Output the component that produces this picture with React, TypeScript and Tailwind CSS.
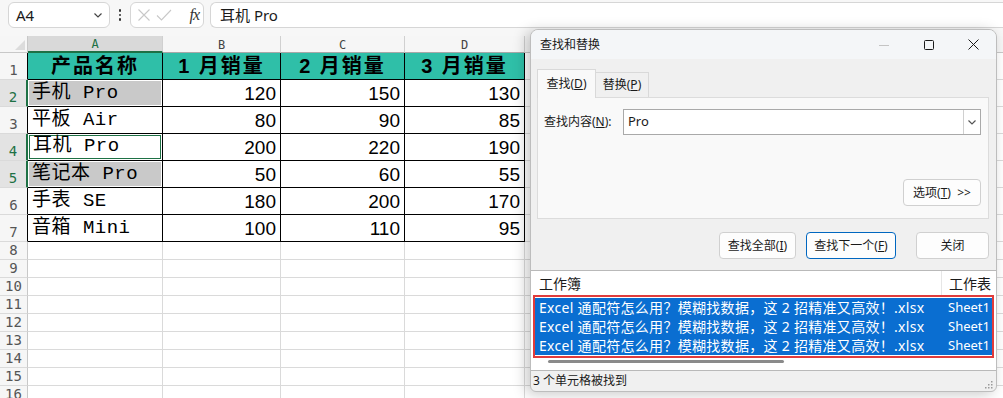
const COLS = [135, 118, 124, 120]
const HEAD = ['产品名称', '1 月销量', '2 月销量', '3 月销量']
const DATA: [string, number, number, number][] = [
  ['手机 Pro', 120, 150, 130],
  ['平板 Air', 80, 90, 85],
  ['耳机 Pro', 200, 220, 190],
  ['笔记本 Pro', 50, 60, 55],
  ['手表 SE', 180, 200, 170],
  ['音箱 Mini', 100, 110, 95],
]
const HITS = [2, 4, 5]
const RESULT = 'Excel 通配符怎么用？模糊找数据，这 2 招精准又高效！.xlsx'

const cellFont = { fontFamily: '"Liberation Mono", "Noto Sans CJK SC", monospace' }
const numFont = { fontFamily: '"Liberation Sans", Arial, sans-serif' }
const hdrFont = { fontFamily: '"DejaVu Sans Mono", "Liberation Mono", monospace' }
const uiFont = { fontFamily: '"Noto Sans", "Noto Sans CJK SC", sans-serif' }

function Chevron({ className = '' }: { className?: string }) {
  return (
    <svg width="12" height="12" viewBox="0 0 12 12" className={className}>
      <path d="M2.5 4.5 L6 8 L9.5 4.5" fill="none" stroke="currentColor" strokeWidth="1.2" />
    </svg>
  )
}

function RowHead({ n, h, line }: { n: number; h: string; line: string }) {
  const hit = HITS.includes(n)
  return (
    <div
      className={`${h} w-[28px] shrink-0 flex items-end justify-center pb-[1px] border-b border-b-[#dadada] border-r ${line} ${hit ? 'bg-[#e3e3e3] text-[#1e7145]' : 'bg-[#f6f6f6] text-[#555]'} text-[14px] leading-none`}
      style={hdrFont}
    >
      <span className="pb-[1px]">{n}</span>
    </div>
  )
}

function Sheet() {
  return (
    <div className="flex flex-col">
      {/* column headers */}
      <div className="flex h-[17px]">
        <div className="w-[28px] shrink-0 bg-[#f6f6f6] border-r border-b border-[#c8c8c8] flex items-end justify-end p-[2px]">
          <svg width="10" height="10" viewBox="0 0 10 10">
            <path d="M10 0 L10 10 L0 10 Z" fill="#dcdcdc" />
          </svg>
        </div>
        {['A', 'B', 'C', 'D'].map((c, i) => (
          <div
            key={c}
            style={{ width: COLS[i], ...hdrFont }}
            className={`shrink-0 flex items-end justify-center text-[12px] leading-none pb-[1px] border-r border-[#d0d0d0] ${i === 0 ? 'bg-[#d9d9d9] text-[#1e7145] border-b-2 border-b-[#1e7145]' : 'bg-[#f6f6f6] text-[#444] border-b border-b-[#a8a8a8]'}`}
          >
            {c}
          </div>
        ))}
        <div className="flex-1 bg-[#f6f6f6] border-b border-[#c8c8c8]" />
      </div>

      {/* row 1 */}
      <div className="flex h-[27px]">
        <RowHead n={1} h="h-[27px]" line="border-r-black" />
        {HEAD.map((t, i) => (
          <div
            key={t}
            style={{ width: COLS[i], fontFamily: '"Liberation Sans", "Noto Sans CJK SC", sans-serif' }}
            className="shrink-0 h-[27px] bg-[#2fbfa8] border-r border-b border-black flex items-end justify-center pb-[1px] text-[20px] font-bold tracking-[2px] leading-[24px] text-black whitespace-pre"
          >
            {t}
          </div>
        ))}
        <div className="flex-1 border-b border-[#dadada]" />
      </div>

      {DATA.map((r, k) => {
        const n = k + 2
        const hit = HITS.includes(n)
        const active = n === 4
        return (
          <div key={n} className="flex h-[27px]">
            <RowHead n={n} h="h-[27px]" line={hit ? 'border-r-2 border-r-[#1e7145]' : 'border-r-black'} />
            <div style={{ width: COLS[0] }} className="shrink-0 h-[27px] border-r border-b border-black p-[1px] bg-white">
              <div
                style={cellFont}
                className={`h-full flex items-end pl-[3px] text-[19px] tracking-[0.5px] leading-[23px] text-black whitespace-pre ${active ? 'border border-[#1e7145] pl-[2px]' : hit ? 'bg-[#c9c9c9]' : ''}`}
              >
                {r[0]}
              </div>
            </div>
            {[r[1], r[2], r[3]].map((v, i) => (
              <div
                key={i}
                style={{ width: COLS[i + 1], ...numFont }}
                className="shrink-0 h-[27px] border-r border-b border-black flex items-end justify-end pr-[4px] text-[19px] leading-[24px] text-black"
              >
                {v}
              </div>
            ))}
            <div className="flex-1 border-b border-[#dadada]" />
          </div>
        )
      })}

      {Array.from({ length: 9 }, (_, k) => {
        const n = k + 8
        return (
          <div key={n} className="flex h-[18px]">
            <RowHead n={n} h="h-[18px]" line="border-r-[#c8c8c8]" />
            {COLS.map((w, i) => (
              <div key={i} style={{ width: w }} className="shrink-0 h-[18px] border-r border-b border-[#dadada]" />
            ))}
            <div className="flex-1 border-b border-[#dadada]" />
          </div>
        )
      })}
    </div>
  )
}

function Btn({ children, focus = false, className = '' }: { children: React.ReactNode; focus?: boolean; className?: string }) {
  return (
    <div
      className={`h-[27px] rounded-[4px] bg-[#fdfdfd] flex items-center justify-center text-[12px] text-[#1a1a1a] ${focus ? 'border border-[#0067c0]' : 'border border-[#d0d0d0]'} ${className}`}
    >
      {children}
    </div>
  )
}

function Dialog() {
  return (
    <div
      style={uiFont}
      className="absolute left-[530px] top-[29px] w-[467px] h-[363px] rounded-t-[8px] rounded-b-[6px] border border-[#bdbdbd] bg-[#f0f0f0] shadow-[-4px_2px_14px_rgba(0,0,0,0.22)] flex flex-col overflow-hidden"
    >
      {/* title bar */}
      <div className="h-[29px] shrink-0 flex items-center bg-[#f4f6f8] pl-[9px]">
        <span className="text-[12px] text-[#1a1a1a] flex-1">查找和替换</span>
        <div className="w-[45px] h-full flex items-center justify-center">
          <svg width="10" height="10" viewBox="0 0 10 10"><path d="M0 5.5 H10" stroke="#c4c4c4" strokeWidth="1" /></svg>
        </div>
        <div className="w-[45px] h-full flex items-center justify-center">
          <svg width="10" height="10" viewBox="0 0 10 10"><rect x="0.5" y="0.5" width="9" height="9" rx="1" fill="none" stroke="#1a1a1a" strokeWidth="1" /></svg>
        </div>
        <div className="w-[45px] h-full flex items-center justify-center">
          <svg width="11" height="11" viewBox="0 0 11 11"><path d="M0.5 0.5 L10.5 10.5 M10.5 0.5 L0.5 10.5" stroke="#1a1a1a" strokeWidth="1" /></svg>
        </div>
      </div>

      <div className="px-[6px] pt-[10px]">
        {/* tabs */}
        <div className="flex items-end h-[28px] relative z-10">
          <div className="h-[29px] w-[59px] bg-[#f9f9f9] border border-[#d9d9d9] border-b-0 flex items-center justify-center text-[12px] text-[#1a1a1a] -mb-px">
            <span>查找(<u>D</u>)</span>
          </div>
          <div className="h-[25px] w-[53px] bg-[#f0f0f0] border border-l-0 border-[#d9d9d9] border-b-0 flex items-center justify-center text-[12px] text-[#1a1a1a]">
            <span>替换(<u>P</u>)</span>
          </div>
        </div>
        {/* panel */}
        <div className="h-[122px] mr-[1px] bg-[#f9f9f9] border border-[#dcdcdc] flex flex-col px-[6px] pt-[11px] pb-[12px]">
          <div className="flex items-center">
            <span className="w-[79px] text-[12px] text-[#1a1a1a]">查找内容(<u>N</u>):</span>
            <div className="flex-1 h-[26px] bg-white border border-[#a9a9a9] flex items-center mr-[1px]">
              <span className="flex-1 pl-[4px] text-[13px] text-[#1a1a1a]">Pro</span>
              <div className="w-[17px] h-full border-l border-[#d0d0d0] flex items-center justify-center text-[#555]">
                <Chevron />
              </div>
            </div>
          </div>
          <div className="flex-1" />
          <div className="flex justify-end pr-[1px]">
            <Btn className="w-[78px]">
              <span>选项(<u>T</u>)&nbsp;&nbsp;&gt;&gt;</span>
            </Btn>
          </div>
        </div>
        {/* buttons */}
        <div className="flex justify-end mt-[13px] mr-[1px]">
          <Btn className="w-[77px]"><span>查找全部(<u>I</u>)</span></Btn>
          <Btn focus className="w-[90px] ml-[10px]"><span>查找下一个(<u>F</u>)</span></Btn>
          <Btn className="w-[73px] ml-[20px]"><span>关闭</span></Btn>
        </div>
      </div>

      {/* results */}
      <div className="mt-[11px] h-[101px] bg-white border-y border-[#b9b9b9] flex flex-col">
        <div className="h-[24px] flex items-center text-[14px] text-[#1a1a1a]">
          <span className="w-[410px] pl-[8px]">工作簿</span>
          <div className="h-full border-l border-[#e6e6e6] pl-[7px] flex items-center">工作表</div>
        </div>
        <div className="mx-[2px] border-2 border-[#e03c3c] py-[1px]">
          {[0, 1, 2].map((i) => (
            <div key={i} className="h-[19px] bg-[#0a6ed1] flex items-center text-[14px] text-white leading-none whitespace-nowrap">
              <span className="w-[413px] shrink-0 pl-[4px] tracking-[0.3px]">{RESULT}</span>
              <span className="text-[13px]">Sheet1</span>
            </div>
          ))}
        </div>
        <div className="h-[3px] ml-[17px] mt-[2px] w-[236px] bg-[#8a8a8a] rounded-full" />
      </div>

      {/* status */}
      <div className="flex-1 flex items-center justify-between pl-[2px] pr-[3px]">
        <span className="text-[12px] text-[#1a1a1a]">3 个单元格被找到</span>
        <svg width="8" height="8" viewBox="0 0 8 8" className="self-end mb-[2px]">
          {[[6, 0], [6, 3], [3, 3], [6, 6], [3, 6], [0, 6]].map(([x, y], i) => (
            <rect key={i} x={x} y={y} width="1.5" height="1.5" fill="#9a9a9a" />
          ))}
        </svg>
      </div>
    </div>
  )
}

export default function App() {
  return (
    <div className="relative w-[1003px] h-[398px] overflow-hidden bg-white">
      {/* formula bar */}
      <div className="h-[36px] bg-[#f7f7f7] flex items-start pt-[2px] pl-[8px]" style={uiFont}>
        <div className="w-[102px] h-[26px] bg-white border border-[#d6d6d6] rounded-[6px] flex items-center pl-[7px] pr-[5px]">
          <span className="flex-1 text-[15px] text-[#1a1a1a]">A4</span>
          <Chevron className="text-[#444]" />
        </div>
        <div className="w-[20px] h-[26px] flex flex-col items-center justify-center gap-[2px]">
          {[0, 1, 2].map((i) => (
            <div key={i} className="w-[2.5px] h-[2.5px] rounded-full bg-[#333]" />
          ))}
        </div>
        <div className="w-[74px] h-[26px] bg-white border border-[#d6d6d6] rounded-[6px] flex items-center pl-[6px] pr-[4px]">
          <svg width="14" height="14" viewBox="0 0 14 14"><path d="M1.5 1.5 L12.5 12.5 M12.5 1.5 L1.5 12.5" stroke="#c8c8c8" strokeWidth="1.1" /></svg>
          <svg width="16" height="14" viewBox="0 0 16 14" className="ml-[5px]"><path d="M1 7.5 L5.5 12 L15 2" fill="none" stroke="#c8c8c8" strokeWidth="1.1" /></svg>
          <span className="ml-auto text-[16px] italic text-[#333] tracking-[-1px]" style={{ fontFamily: '"Liberation Serif", serif' }}>fx</span>
        </div>
        <div className="ml-[6px] flex-1 h-[26px] bg-white border border-[#d6d6d6] border-r-0 rounded-l-[6px] flex items-center pl-[9px]">
          <span className="text-[15px] text-[#1a1a1a]">耳机 Pro</span>
        </div>
      </div>
      <Sheet />
      <Dialog />
    </div>
  )
}
